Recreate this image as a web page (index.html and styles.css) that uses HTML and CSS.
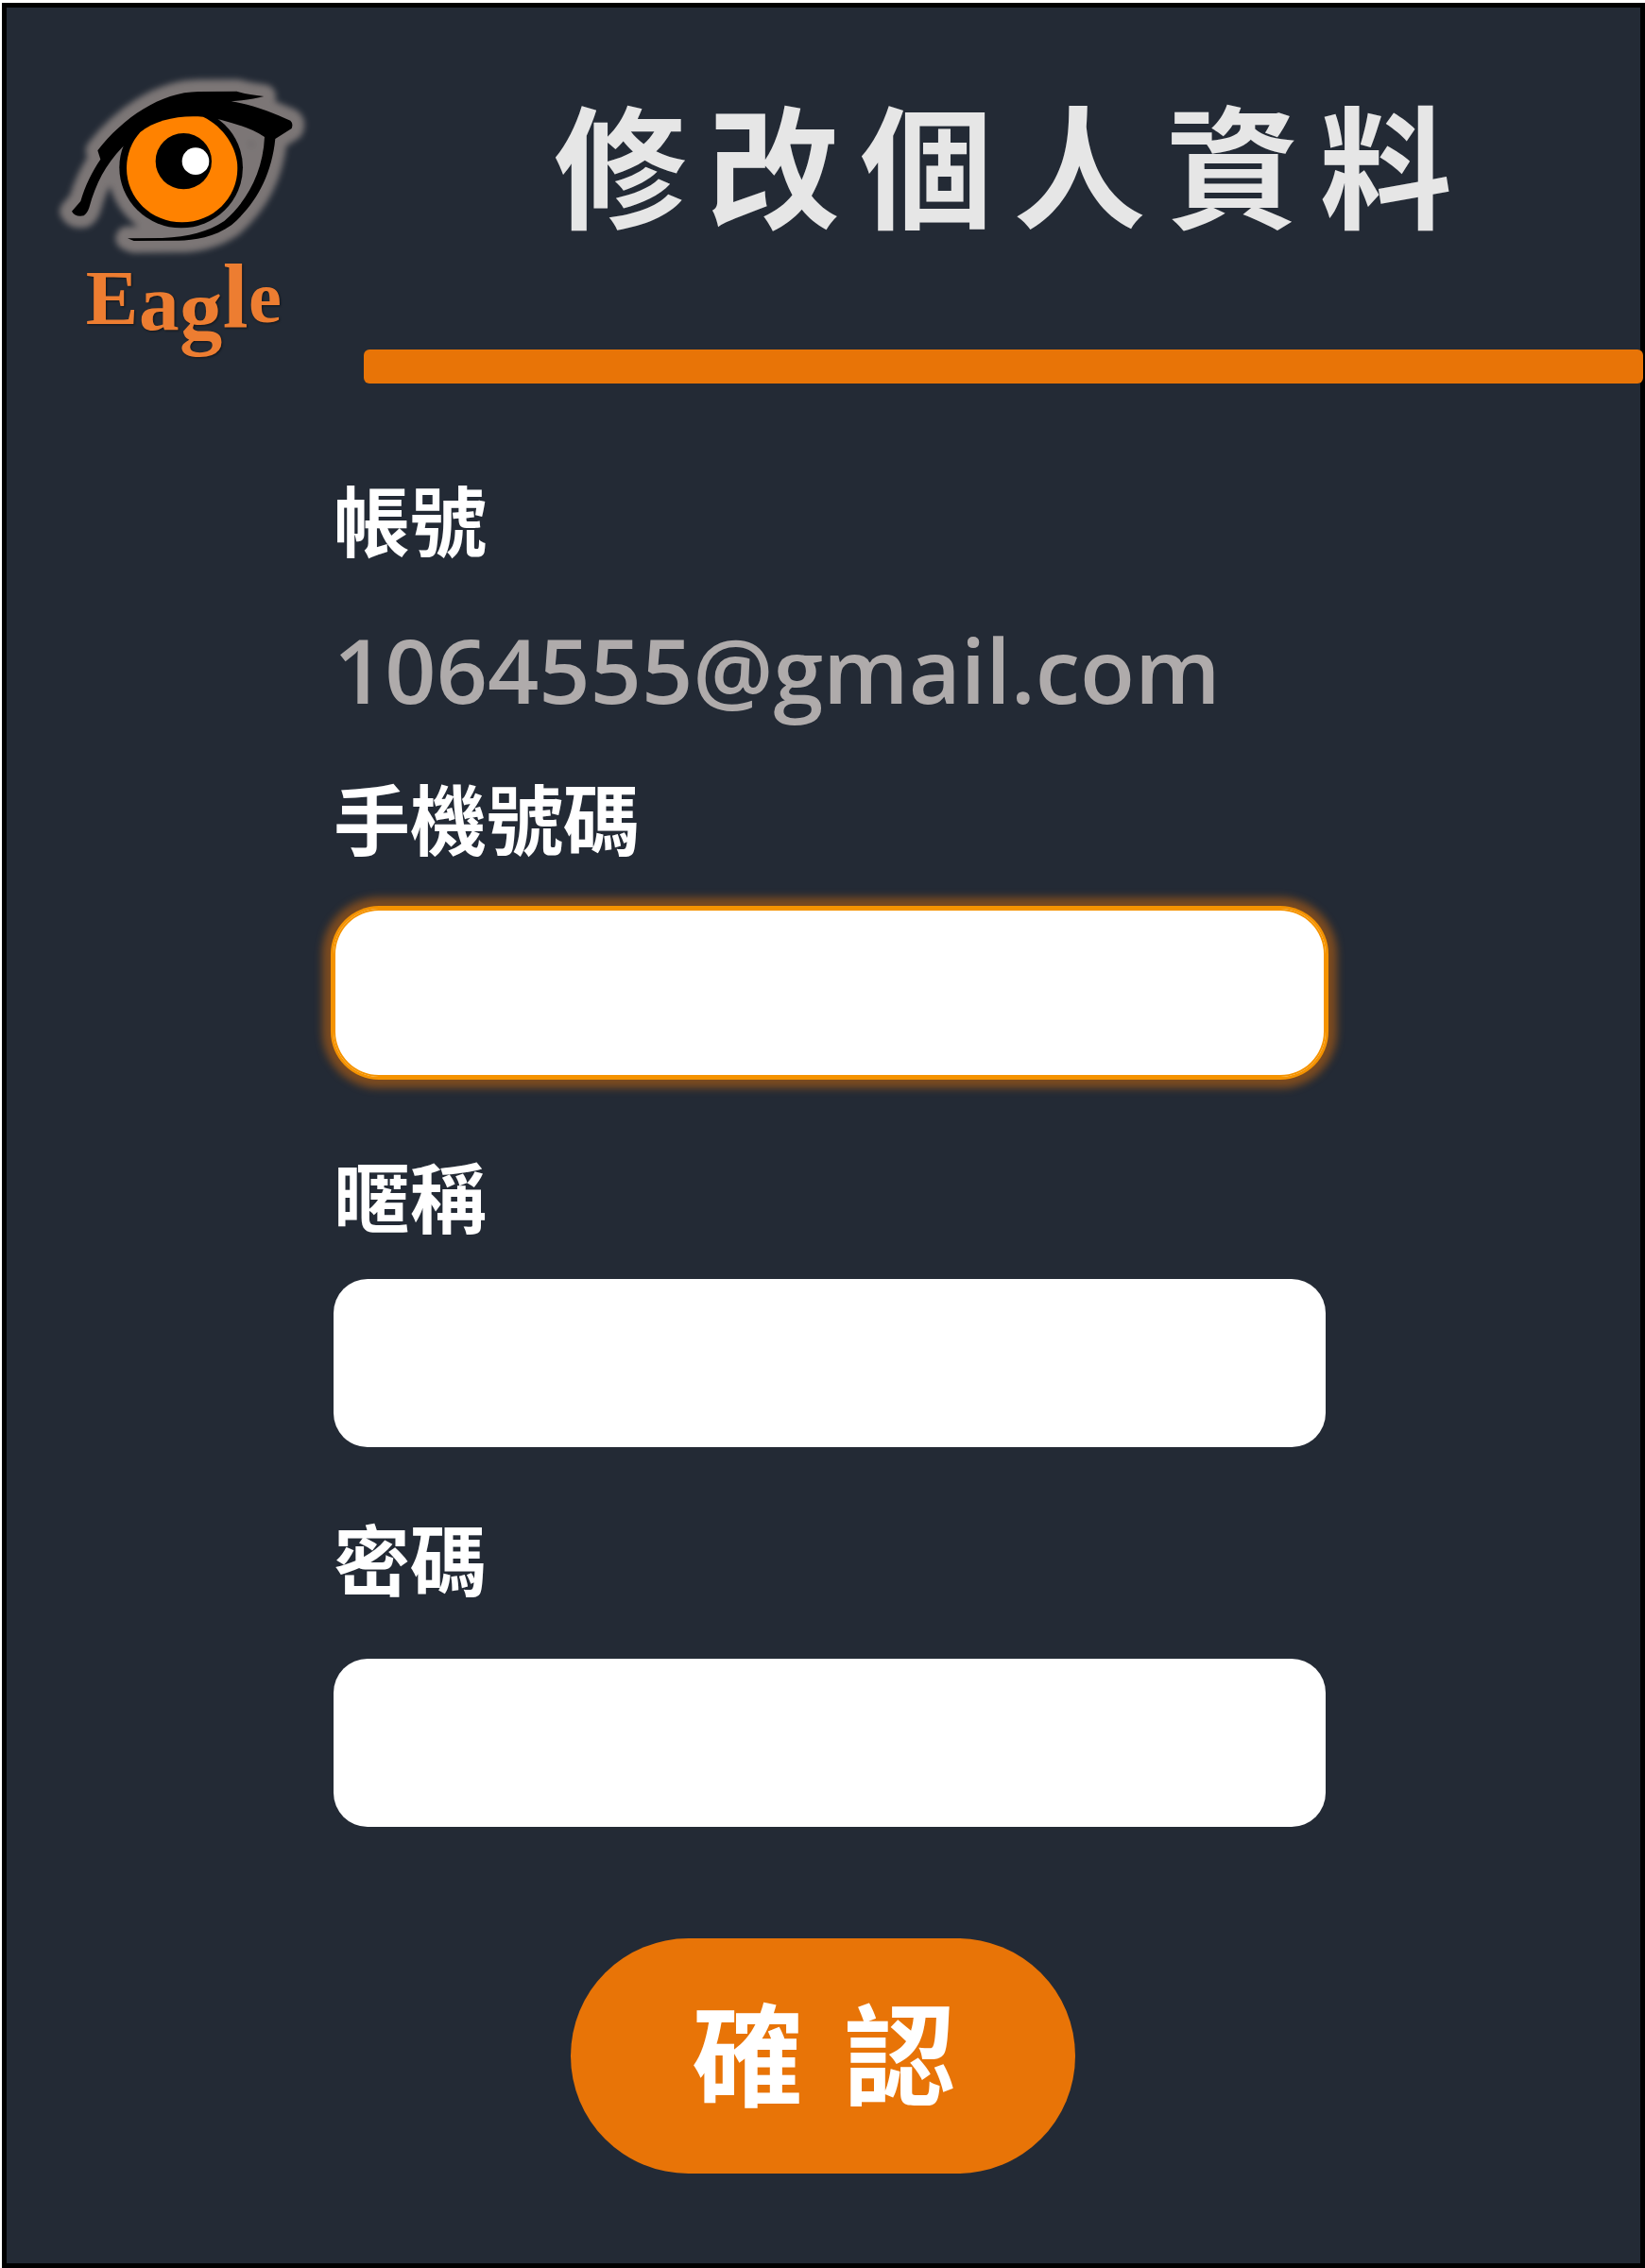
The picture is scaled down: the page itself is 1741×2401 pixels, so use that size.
FILE: index.html
```html
<!DOCTYPE html>
<html lang="zh-Hant">
<head>
  <meta charset="utf-8">
  <meta name="viewport" content="width=device-width, initial-scale=1">
  <title>修改個人資料</title>
  <link rel="stylesheet" href="styles.css">
</head>
<body>
  <div class="screen">
    <header class="header">
      <svg class="logo" viewBox="0 0 960 1020" role="img" aria-label="Eagle">
        <defs>
          <filter id="halo" x="-20%" y="-20%" width="140%" height="140%">
            <feGaussianBlur stdDeviation="9"/>
          </filter>
          <g id="eye">
            <ellipse cx="455" cy="352" rx="196" ry="192"/>
            <path d="M190 298C270 195 390 112 510 111L632 110Q660 119 718 126Q680 136 614 142C690 154 745 178 802 203Q812 212 806 228L754 261C742 380 690 470 615 535C560 575 490 585 440 584L305 585L285 577L395 576C480 572 540 556 592 522C660 465 715 370 720 255C680 228 630 214 580 200L525 191C440 184 370 206 325 240L268 288C215 345 185 400 163 480Q157 497 146 505Q118 510 108 491L136 459C150 410 175 360 199 326Z"/>
          </g>
        </defs>
        <use href="#eye" class="eye-halo" filter="url(#halo)"/>
        <use href="#eye"/>
        <path class="iris" d="M325 240C370 202 450 184 525 191C590 222 634 290 634 354C634 450 556 526 458 526C360 526 282 450 282 354C282 310 298 270 325 240Z"/>
        <circle cx="463" cy="332" r="89"/>
        <circle class="glint" cx="501" cy="332" r="43"/>
        <text class="wordmark"><tspan x="152" y="850" font-size="250">E</tspan><tspan x="321" y="868" font-size="256">a</tspan><tspan x="450" y="898" font-size="272">g</tspan><tspan x="587" y="860" font-size="290">l</tspan><tspan x="669" y="842" font-size="236">e</tspan></text>
      </svg>
      <h1 class="title">修改個人資料</h1>
      <div class="rule"></div>
    </header>

    <form class="form">
      <div class="field field-account">
        <span class="label">帳號</span>
        <span class="account">1064555@gmail.com</span>
      </div>
      <div class="field field-phone">
        <label class="label" for="phone">手機號碼</label>
        <input class="input input-active" id="phone" type="tel">
      </div>
      <div class="field field-nickname">
        <label class="label" for="nickname">暱稱</label>
        <input class="input" id="nickname" type="text">
      </div>
      <div class="field field-password">
        <label class="label" for="password">密碼</label>
        <input class="input" id="password" type="password">
      </div>
      <button class="submit" type="button">確 認</button>
    </form>
  </div>
</body>
</html>
```
FILE: styles.css
```css
* {
  box-sizing: border-box;
}

body {
  margin: 0;
  padding: 3px 0 0 2px;
  background: #fff;
  font-family: "Noto Sans CJK TC", sans-serif;
}

.screen {
  border: 5px solid #000;
  background: #232a35;
  padding-bottom: 95px;
}

.header {
  display: grid;
  grid-template-columns: 378px 1fr;
  grid-template-rows: 362px 36px;
}

.logo {
  grid-row: 1 / 3;
  width: 320px;
  height: 340px;
  margin: 52px 0 0 33px;
}

.eye-halo {
  fill: #7b7676;
  stroke: #7b7676;
  stroke-width: 76px;
  stroke-linejoin: round;
}

.iris {
  fill: #ff8200;
}

.glint {
  fill: #fff;
}

.wordmark {
  fill: #ed7d31;
  font-family: "Liberation Serif", serif;
  font-weight: 700;
  filter: drop-shadow(3px 3px 3px rgba(0, 0, 0, 0.5));
}

.title {
  margin: 62px 0 0;
  padding-left: 24px;
  color: #e6e6e6;
  font-size: 140px;
  font-weight: 700;
  line-height: 200px;
  letter-spacing: 22px;
  text-align: center;
}

.rule {
  margin-right: -3px;
  border-radius: 6px;
  background: #e87407;
}

.form {
  display: grid;
  grid-template-columns: 346fr 1050fr 333fr;
  padding-top: 92px;
}

.field,
.submit {
  grid-column: 2;
}

.field {
  display: flex;
  flex-direction: column;
}

.label {
  color: #fff;
  font-size: 81px;
  font-weight: 700;
  line-height: 100px;
}

.account {
  color: #afabab;
  font-family: "Open Sans", sans-serif;
  font-size: 95px;
  font-weight: 600;
  line-height: 120px;
}

.field-account {
  gap: 50px;
  margin-bottom: 46px;
}

.field-phone {
  gap: 48px;
  margin-bottom: 74px;
}

.field-nickname {
  gap: 40px;
  margin-bottom: 66px;
}

.field-password {
  gap: 58px;
  margin-bottom: 118px;
}

.input {
  width: 100%;
  height: 178px;
  padding: 0 40px;
  border: 0;
  border-radius: 36px;
  outline: 0;
  background: #fff;
  color: #232a35;
  font: inherit;
  font-size: 81px;
}

.input-active {
  border-radius: 48px;
  box-shadow:
    inset 0 0 0 2px #f59300,
    0 0 0 3px #f59300,
    0 0 8px 12px rgba(233, 115, 6, 0.45);
}

.submit {
  justify-self: center;
  width: 534px;
  height: 249px;
  margin-right: 14px;
  padding: 0 0 14px 10px;
  border: 0;
  border-radius: 125px;
  background: #e87407;
  color: #fff;
  font: inherit;
  font-size: 118px;
  font-weight: 700;
  letter-spacing: 8px;
}
```
